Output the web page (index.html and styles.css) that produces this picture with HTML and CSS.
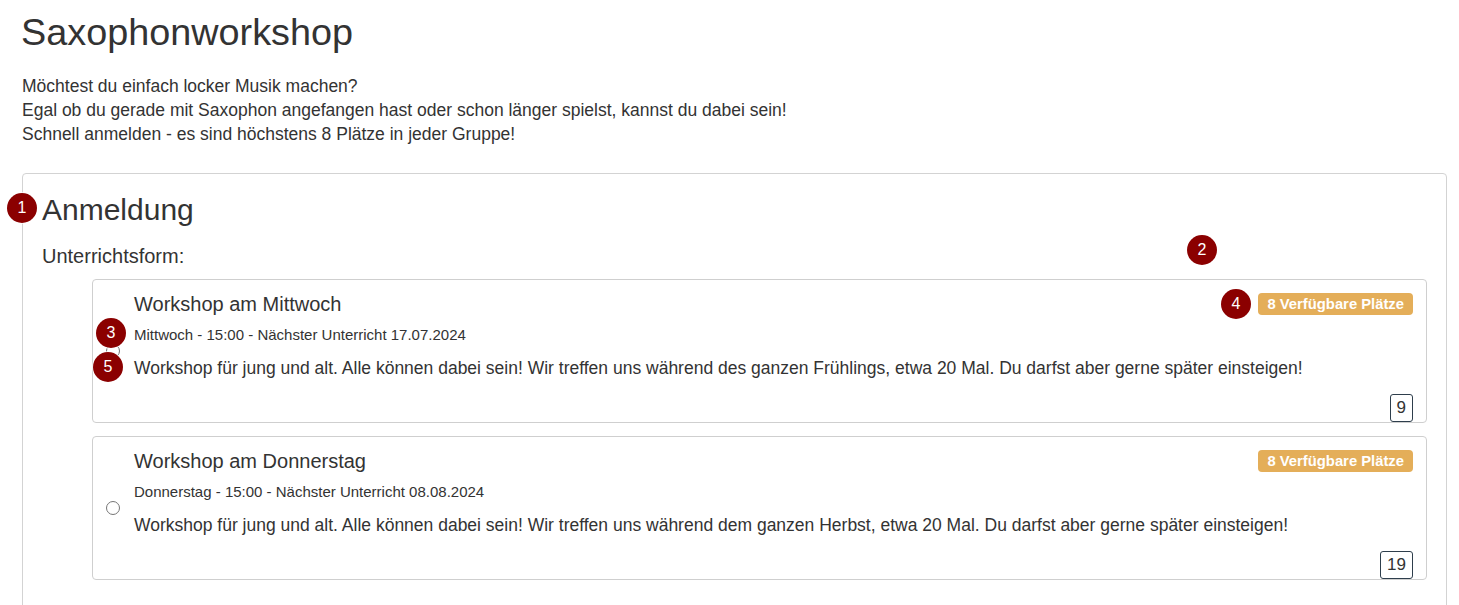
FILE: index.html
```html
<!DOCTYPE html>
<html lang="de">
<head>
    <meta charset="UTF-8">
    <meta name="viewport" content="width=device-width, initial-scale=1.0">
    <title>Saxophonworkshop</title>
    <link rel="stylesheet" href="styles.css">
</head>
<body>
    <h1 class="page-title">Saxophonworkshop</h1>

    <p class="intro">
        Möchtest du einfach locker Musik machen?<br>
        Egal ob du gerade mit Saxophon angefangen hast oder schon länger spielst, kannst du dabei sein!<br>
        Schnell anmelden - es sind höchstens 8 Plätze in jeder Gruppe!
    </p>

    <div class="panel">
        <h2 class="panel-title">Anmeldung</h2>
        <div class="field-label">Unterrichtsform:</div>

        <div class="options">
            <label class="option">
                <div class="option-radio">
                    <input type="radio" name="kurs" value="mittwoch">
                </div>
                <div class="option-body">
                    <div class="option-head">
                        <span class="option-title">Workshop am Mittwoch</span>
                        <span class="badge">8 Verfügbare Plätze</span>
                    </div>
                    <div class="option-meta">Mittwoch - 15:00 - Nächster Unterricht 17.07.2024</div>
                    <div class="option-text">Workshop für jung und alt. Alle können dabei sein! Wir treffen uns während des ganzen Frühlings, etwa 20 Mal. Du darfst aber gerne später einsteigen!</div>
                    <div class="option-foot"><span class="count">9</span></div>
                </div>
            </label>

            <label class="option">
                <div class="option-radio">
                    <input type="radio" name="kurs" value="donnerstag">
                </div>
                <div class="option-body">
                    <div class="option-head">
                        <span class="option-title">Workshop am Donnerstag</span>
                        <span class="badge">8 Verfügbare Plätze</span>
                    </div>
                    <div class="option-meta">Donnerstag - 15:00 - Nächster Unterricht 08.08.2024</div>
                    <div class="option-text">Workshop für jung und alt. Alle können dabei sein! Wir treffen uns während dem ganzen Herbst, etwa 20 Mal. Du darfst aber gerne später einsteigen!</div>
                    <div class="option-foot"><span class="count">19</span></div>
                </div>
            </label>
        </div>
    </div>

    <!-- Markierungen -->
    <span class="marker m1">1</span>
    <span class="marker m2">2</span>
    <span class="marker m3">3</span>
    <span class="marker m4">4</span>
    <span class="marker m5">5</span>
</body>
</html>
```

FILE: styles.css
```css
html, body {
    height: 100%;
    overflow: hidden;
}

body {
    position: relative;
    margin: 0;
    padding: 0 12px 0 22px;
    font-family: "Liberation Sans", Arial, sans-serif;
    color: #333;
    background-color: #fff;
}

.page-title {
    margin: 12px 0 0 -1px;
    font-size: 37.8px;
    font-weight: normal;
    line-height: 41px;
}

.intro {
    margin: 21px 0 0;
    font-size: 17.5px;
    line-height: 24px;
}

.panel {
    margin-top: 27px;
    padding: 19px 19px 200px;
    border: 1px solid #d3d3d3;
    border-radius: 4px;
}

.panel-title {
    margin: 0;
    font-size: 30px;
    font-weight: normal;
    line-height: 33px;
}

.field-label {
    margin-top: 15px;
    font-size: 20px;
    line-height: 30px;
}

.options {
    display: flex;
    flex-direction: column;
    gap: 13px;
    margin: 8px 0 0 50px;
}

.option {
    display: flex;
    height: 142px;
    border: 1px solid #cfcfcf;
    border-radius: 4px;
    cursor: pointer;
}

.option-radio {
    display: flex;
    align-items: center;
    justify-content: center;
    width: 41px;
    flex-shrink: 0;
}

.option-radio input {
    -webkit-appearance: none;
    appearance: none;
    width: 14px;
    height: 14px;
    margin: 0 1px 0 0;
    border: 1px solid #767676;
    border-radius: 50%;
    background: #fff;
}

.option-body {
    flex: 1;
    display: flex;
    flex-direction: column;
    padding: 12px 13px 0 0;
}

.option-head {
    display: flex;
    justify-content: space-between;
    align-items: flex-start;
}

.option-title {
    font-size: 20px;
    line-height: 24px;
}

.badge {
    margin-top: 1px;
    padding: 0 9px;
    height: 22px;
    line-height: 22px;
    font-size: 14.8px;
    font-weight: bold;
    color: #fff;
    background-color: #e4ae59;
    border-radius: 4px;
}

.option-meta {
    margin-top: 9px;
    font-size: 15px;
    line-height: 20px;
}

.option-text {
    margin-top: 11px;
    font-size: 17.5px;
    line-height: 24px;
}

.option-foot {
    margin-top: auto;
    display: flex;
    justify-content: flex-end;
}

.count {
    height: 26px;
    padding: 0 6px;
    line-height: 26px;
    font-size: 17px;
    border: 1px solid #2e3e4c;
    border-radius: 3px;
}

.marker {
    position: absolute;
    width: 30px;
    height: 30px;
    line-height: 30px;
    text-align: center;
    font-size: 16px;
    color: #fff;
    background-color: #8b0000;
    border-radius: 50%;
    box-shadow: 0 0 0 1px rgba(255, 255, 255, 0.7);
}

.m1 { left: 7px;    top: 193px; }
.m2 { left: 1187px; top: 235px; }
.m3 { left: 96px;   top: 318px; }
.m4 { left: 1221px; top: 289px; }
.m5 { left: 93px;   top: 352px; }
```
